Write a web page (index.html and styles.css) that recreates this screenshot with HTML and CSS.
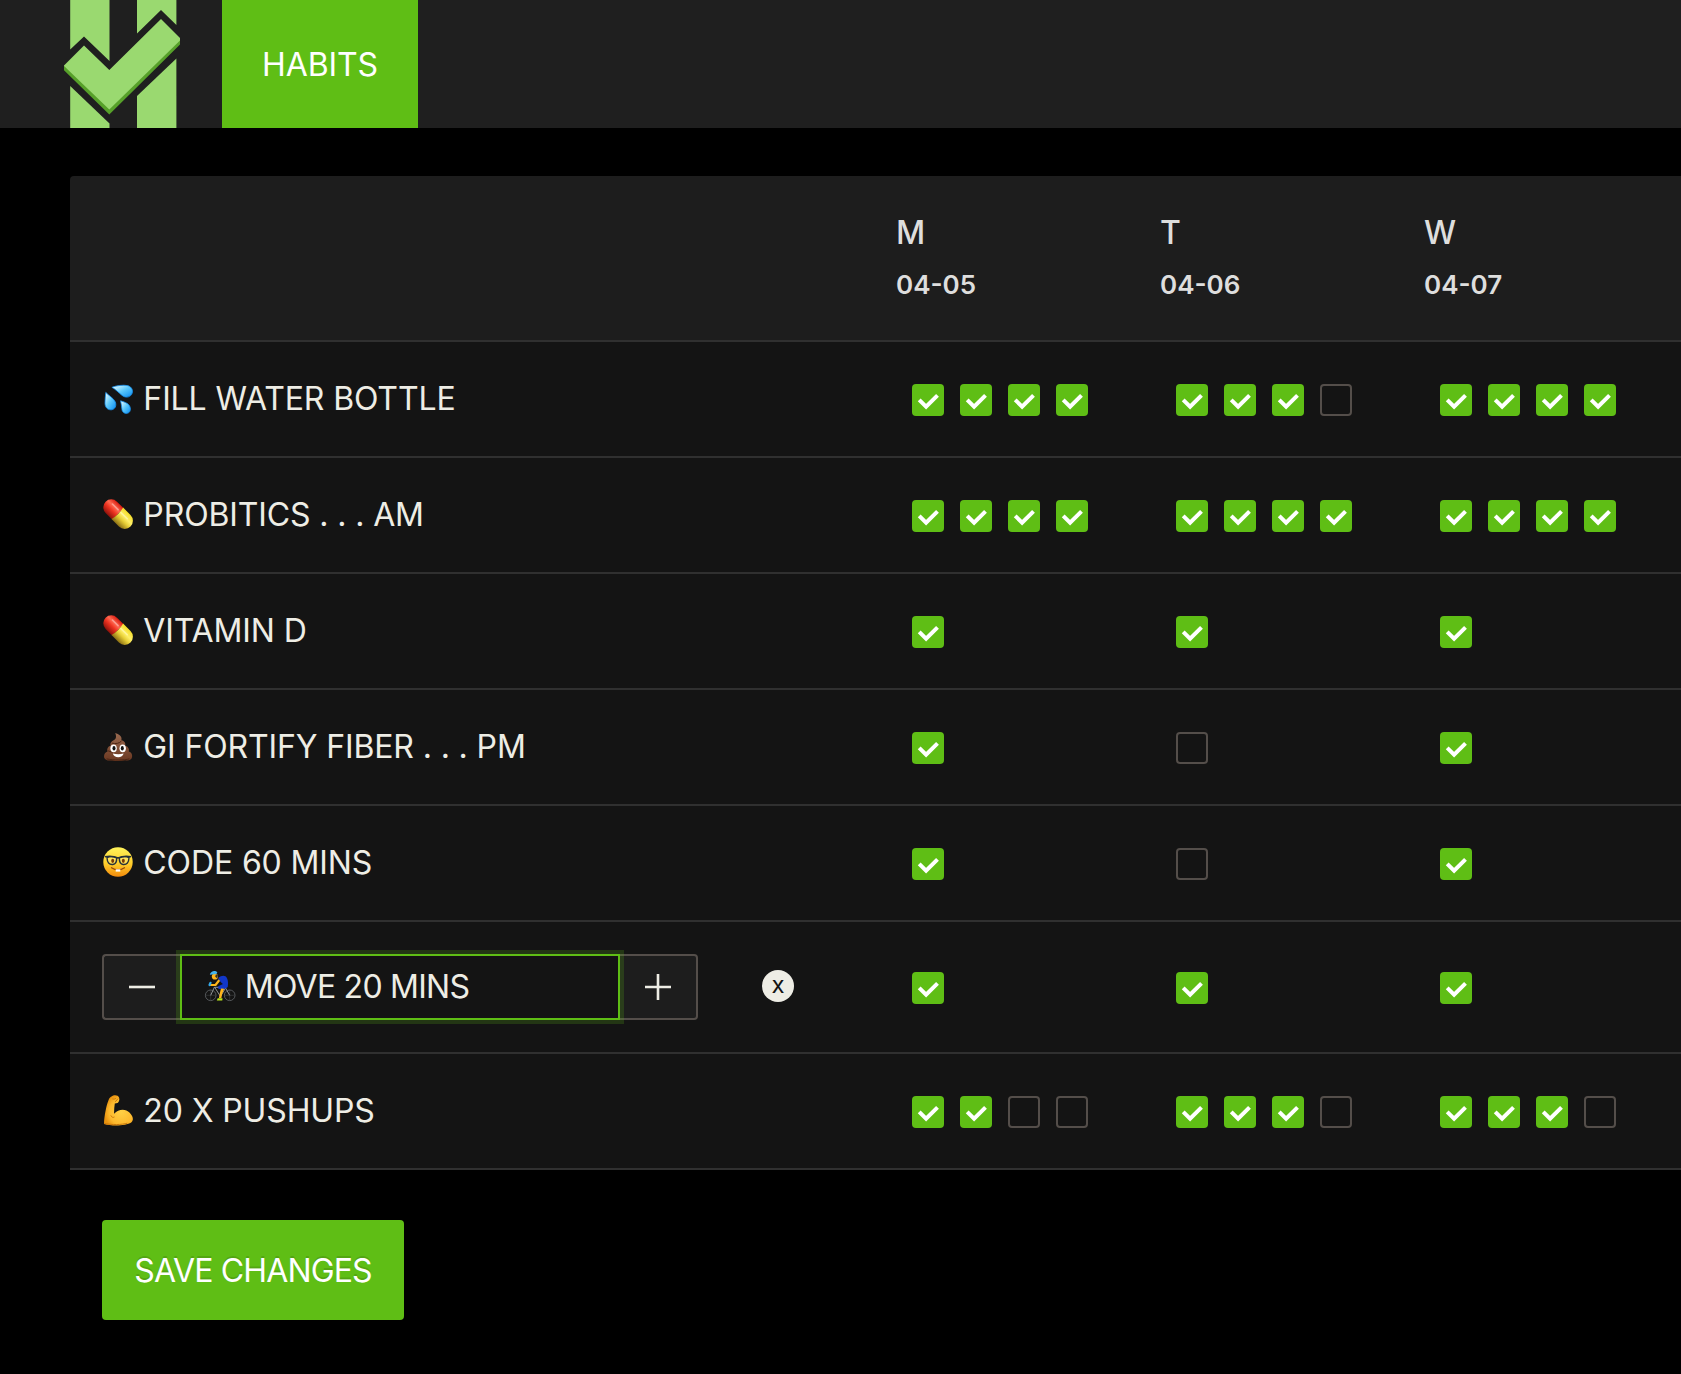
FILE: index.html
```html
<!DOCTYPE html>
<html lang="en">
<head>
<meta charset="utf-8">
<title>Habits</title>
<link rel="stylesheet" href="styles.css">
</head>
<body>
<svg class="sprite" aria-hidden="true">
  <defs>
    <linearGradient id="water" x1="0" y1="0" x2="1" y2="1"><stop offset="0.1" stop-color="#d9f6ff"/><stop offset="0.5" stop-color="#5cc8fb"/><stop offset="1" stop-color="#0a8cf0"/></linearGradient>
    <linearGradient id="pill-red" x1="0" y1="0" x2="0" y2="1"><stop offset="0" stop-color="#d81c10"/><stop offset="0.35" stop-color="#ff6a52"/><stop offset="0.6" stop-color="#ee3320"/><stop offset="1" stop-color="#8e120b"/></linearGradient>
    <linearGradient id="pill-yellow" x1="0" y1="0" x2="0" y2="1"><stop offset="0" stop-color="#f4dc26"/><stop offset="0.35" stop-color="#fff06a"/><stop offset="0.6" stop-color="#e6ce35"/><stop offset="1" stop-color="#8a6e14"/></linearGradient>
    <linearGradient id="brown" x1="0" y1="0" x2="0" y2="1"><stop offset="0" stop-color="#9a6a50"/><stop offset="1" stop-color="#6b3821"/></linearGradient>
    <linearGradient id="face" x1="0" y1="0" x2="0" y2="1"><stop offset="0" stop-color="#fff35a"/><stop offset="0.55" stop-color="#ffcf2c"/><stop offset="1" stop-color="#f28a0c"/></linearGradient>
    <radialGradient id="skin" cx="0.6" cy="0.55" r="0.6"><stop offset="0" stop-color="#ffd045"/><stop offset="0.7" stop-color="#fdb92d"/><stop offset="1" stop-color="#e8920f"/></radialGradient>
  </defs>
  <symbol id="e-water" viewBox="0 0 32 32">
    <g fill="url(#water)" stroke="#1590f0" stroke-width=".8" stroke-linejoin="round">
      <path d="M9.900 5.300C14 3.700 21 2.600 25.500 3.600c4.700 1.200 6.200 5.600 4 9-2.100 3-6.300 3.300-9.400.8C16.500 10.600 13.800 7.500 9.900 5.300Z"/>
      <path d="M3.800 10.400C6.500 13.200 11.500 16.200 13.200 19.800c1.500 3.600.100 7.600-3.900 8-4.200.2-6.300-3-6.300-6.700 0-3.600.5-7.500.8-10.700Z"/>
      <path d="M18.600 18.800c3 1 6.700 1.900 8.600 4.500 2.100 3.200 1.400 7.300-2 8-3.200.6-5.300-1.700-5.400-4.800-.1-2.700-.8-5.200-1.200-7.700Z"/>
    </g>
  </symbol>
  <symbol id="e-pill" viewBox="0 0 32 32">
    <g transform="translate(16 16) rotate(45)">
      <path d="M0-8H-9.500A8 8 0 0 0-9.500 8H0Z" fill="url(#pill-red)"/>
      <path d="M-1-8.200H9.500a8.200 8.200 0 0 1 0 16.400H-1Q1.200 0-1-8.200Z" fill="url(#pill-yellow)"/>
      <path d="M-11-3.200H-3M1-3.200H10" stroke="#fff" stroke-opacity=".4" stroke-width="1.500" stroke-linecap="round"/>
    </g>
  </symbol>
  <symbol id="e-poop" viewBox="0 0 32 32">
    <path d="M13.200 3c3.600 1.200 7.200 3.400 6.200 7 3.200 1.200 4.500 3.200 3.800 5.800 3 .8 4.300 3 3.600 5.700 2.600.8 3.600 3 3.300 5.200-.3 3.200-3.400 4.300-7 3.600-4.600.8-9 .8-13 .1-4.400.7-8-.8-8.100-4 0-2.500 1.400-4.300 3.500-4.900-.9-2.800.4-5 3-5.800-.5-2.800.9-4.800 3.600-5.700 1.900-.9 2.600-3.600 1.100-7Z" fill="url(#brown)"/>
    <path d="M10 13.200c3.600 1 7.600.2 9.300-2M6.500 21c2 1 4 1 5 .7M5 29c7 1.400 17 1.400 22 0" stroke="#4b2514" stroke-width="1" fill="none" stroke-linecap="round"/>
    <ellipse cx="11.600" cy="18.300" rx="3.200" ry="3.900" fill="#fff"/><ellipse cx="20.700" cy="18.300" rx="3.200" ry="3.900" fill="#fff"/>
    <ellipse cx="12" cy="18.300" rx="1.500" ry="2.300" fill="#111"/><ellipse cx="20.300" cy="18.300" rx="1.500" ry="2.300" fill="#111"/>
    <path d="M10.800 23.600q5.400 1.400 10.800 0c-.8 4.800-9.900 4.800-10.800 0Z" fill="#fff"/>
  </symbol>
  <symbol id="e-nerd" viewBox="0 0 32 32">
    <circle cx="16" cy="16" r="14.700" fill="url(#face)"/>
    <g fill="#fff6a0" fill-opacity=".35" stroke="#26313a" stroke-width="1.400"><path d="M5 11.500q4.800-1.800 9.600.3.400 6.300-3.800 6.700-5.500.500-5.800-7Z"/><path d="M27 11.500q-4.800-1.800-9.600.3-.4 6.300 3.800 6.700 5.500.500 5.800-7Z"/></g>
    <path d="M3 10.800q6.500-1.700 13 1.200 6.500-2.900 13-1.200" stroke="#26313a" stroke-width="1.500" fill="none"/>
    <ellipse cx="10.700" cy="14.800" rx="1.500" ry="2.100" fill="#7a3b08"/><ellipse cx="21.300" cy="14.800" rx="1.500" ry="2.100" fill="#7a3b08"/>
    <path d="M9.500 21.800q6.500 4.200 13 0" stroke="#9a4a08" stroke-width="1.300" fill="none" stroke-linecap="round"/>
    <path d="M13.700 23.300h4.600v2.300h-4.600Z" fill="#fff"/>
  </symbol>
  <symbol id="e-bike" viewBox="0 0 32 32">
    <g fill="none" stroke="#55585b" stroke-width="1"><circle cx="6.700" cy="25.300" r="5.300"/><circle cx="25.700" cy="25.300" r="5.300"/><path d="M1.600 25.300h10M6.700 20v10M20.500 25.300h10M25.700 20v10" stroke-width=".4"/></g>
    <path d="M6.700 25.300 10.500 17l6 9.500 5-8.500 4.200 7.300M10.500 17.300h10.800" fill="none" stroke="#8d9194" stroke-width="1"/>
    <path d="M15 10.500 11.500 15H6.500" fill="none" stroke="#ffb61a" stroke-width="2.200" stroke-linecap="round" stroke-linejoin="round"/>
    <path d="M6.500 12.800 5.500 15" stroke="#35a8e8" stroke-width="2.200" stroke-linecap="round"/>
    <path d="M14.200 8c3.200-2.800 7.200-3.200 8.800.200 1.300 2.700 1.200 6 .7 8.800-1.800 2.200-6.100 2.300-9.200 2l-.4-2.800 4.900-2.200c-1.600-1.200-3.900-3.500-4.800-6Z" fill="#1237c8"/>
    <path d="m17 18.400 3.200.3-2.100 5.300-.7 4h-2.500l1-5.300Z" fill="#ffb61a"/>
    <path d="M13.700 28.200h4.800l-.2 2.300h-5.500Z" fill="#b9e51b"/>
    <circle cx="10.900" cy="6.500" r="3.100" fill="#ffb61a"/>
    <path d="M5.800 4.700C6.800.5 11.400.2 13.300 2.200l-.8 1.800Z" fill="#45b4ec"/><path d="m11.800 4.400 2.200.2-.7 4-2.100-1.800Z" fill="#31302d"/>
  </symbol>
  <symbol id="e-arm" viewBox="0 0 32 32">
    <path d="M9.500 2.600c2.400-2.200 6.700-1.600 7.500.8.800 2.200.200 4.500-1.400 5.600l-2.800.500c-.5 3.600-.8 7-.7 10.200 4.500-5 11.400-5.400 15.600-1 3.600 3.800 4.200 7.600 1.500 9.700-5 3.300-18.600 4.100-27.200 1.600C2.200 22 4.500 10.500 6.800 5.500c.5-1.300 1.500-2.200 2.700-2.900Z" fill="url(#skin)"/>
    <path d="M10.800 5c1 .2 2.400.200 3-.6M13.500 7.500l2.300-2.600M9 21.800c.7 1.500 2 2 3.100 1.400M2.500 29.400c7 1.800 17.500 1.400 22.500-.1" fill="none" stroke="#c9780c" stroke-width="1" stroke-linecap="round"/>
  </symbol>
  <symbol id="on" viewBox="0 0 32 32"><rect width="32" height="32" rx="4" fill="#5fbe15"/><path d="M7.200 15.800 14.100 22.600 25.500 11.300" fill="none" stroke="#fff" stroke-width="4"/></symbol>
  <symbol id="off" viewBox="0 0 32 32"><rect x="1" y="1" width="30" height="30" rx="3" fill="none" stroke="#544e4a" stroke-width="2"/></symbol>
</svg>

<header class="navbar">
  <svg class="logo" viewBox="64 0 116 128" role="img" aria-label="Logo">
    <g fill="#9ad970"><path d="M70.200 0h39.300v61L84 36.500 70.200 49.500Z"/><path d="M137 0h39.400v25L161 10 137 33.500Z"/><path d="m70.200 86 39.300 37.500v4.500H70.200Z"/><path d="M176.400 58.500V128H137V96Z"/></g>
    <path d="M64 65.500v4.700l45.300 44.300L180 44.500V38l-70.700 69Z" fill="#57a12a"/>
    <path d="M64 65.500 84 45.500 109.300 70 161 19l19 19v2.500L109.300 109.500 64 66Z" fill="#9ad970"/>
  </svg>
  <a class="tab">HABITS</a>
</header>

<main class="page">
  <table class="habits">
    <colgroup><col class="name-col"><col class="day-col"><col class="day-col"><col></colgroup>
    <thead>
      <tr><th></th><th>M<br><small>04-05</small></th><th>T<br><small>04-06</small></th><th>W<br><small>04-07</small></th></tr>
    </thead>
    <tbody>
      <tr>
        <td><svg class="emoji"><use href="#e-water"/></svg> FILL WATER BOTTLE</td>
        <td><div class="checks"><svg><use href="#on"/></svg><svg><use href="#on"/></svg><svg><use href="#on"/></svg><svg><use href="#on"/></svg></div></td>
        <td><div class="checks"><svg><use href="#on"/></svg><svg><use href="#on"/></svg><svg><use href="#on"/></svg><svg><use href="#off"/></svg></div></td>
        <td><div class="checks"><svg><use href="#on"/></svg><svg><use href="#on"/></svg><svg><use href="#on"/></svg><svg><use href="#on"/></svg></div></td>
      </tr>
      <tr>
        <td><svg class="emoji"><use href="#e-pill"/></svg> PROBITICS . . . AM</td>
        <td><div class="checks"><svg><use href="#on"/></svg><svg><use href="#on"/></svg><svg><use href="#on"/></svg><svg><use href="#on"/></svg></div></td>
        <td><div class="checks"><svg><use href="#on"/></svg><svg><use href="#on"/></svg><svg><use href="#on"/></svg><svg><use href="#on"/></svg></div></td>
        <td><div class="checks"><svg><use href="#on"/></svg><svg><use href="#on"/></svg><svg><use href="#on"/></svg><svg><use href="#on"/></svg></div></td>
      </tr>
      <tr>
        <td><svg class="emoji"><use href="#e-pill"/></svg> VITAMIN D</td>
        <td><div class="checks"><svg><use href="#on"/></svg></div></td>
        <td><div class="checks"><svg><use href="#on"/></svg></div></td>
        <td><div class="checks"><svg><use href="#on"/></svg></div></td>
      </tr>
      <tr>
        <td><svg class="emoji"><use href="#e-poop"/></svg> GI FORTIFY FIBER . . . PM</td>
        <td><div class="checks"><svg><use href="#on"/></svg></div></td>
        <td><div class="checks"><svg><use href="#off"/></svg></div></td>
        <td><div class="checks"><svg><use href="#on"/></svg></div></td>
      </tr>
      <tr>
        <td><svg class="emoji"><use href="#e-nerd"/></svg> CODE 60 MINS</td>
        <td><div class="checks"><svg><use href="#on"/></svg></div></td>
        <td><div class="checks"><svg><use href="#off"/></svg></div></td>
        <td><div class="checks"><svg><use href="#on"/></svg></div></td>
      </tr>
      <tr>
        <td>
          <div class="editor">
            <div class="group">
              <span class="addon minus"><svg class="sign" viewBox="0 0 28 28"><path d="M1 14h26"/></svg></span>
              <div class="field"><span><svg class="emoji"><use href="#e-bike"/></svg> MOVE 20 MINS</span></div>
              <span class="addon plus"><svg class="sign" viewBox="0 0 28 28"><path d="M1 14h26M14 1v26"/></svg></span>
            </div>
            <span class="remove">x</span>
          </div>
        </td>
        <td><div class="checks"><svg><use href="#on"/></svg></div></td>
        <td><div class="checks"><svg><use href="#on"/></svg></div></td>
        <td><div class="checks"><svg><use href="#on"/></svg></div></td>
      </tr>
      <tr>
        <td><svg class="emoji"><use href="#e-arm"/></svg> 20 X PUSHUPS</td>
        <td><div class="checks"><svg><use href="#on"/></svg><svg><use href="#on"/></svg><svg><use href="#off"/></svg><svg><use href="#off"/></svg></div></td>
        <td><div class="checks"><svg><use href="#on"/></svg><svg><use href="#on"/></svg><svg><use href="#on"/></svg><svg><use href="#off"/></svg></div></td>
        <td><div class="checks"><svg><use href="#on"/></svg><svg><use href="#on"/></svg><svg><use href="#on"/></svg><svg><use href="#off"/></svg></div></td>
      </tr>
    </tbody>
  </table>
  <button class="save">SAVE CHANGES</button>
</main>
</body>
</html>
```

FILE: styles.css
```css
* { box-sizing: border-box; }

body {
  margin: 0;
  min-height: 100vh;
  background: #000;
  color: #eeede5;
  font-family: Inter, "Liberation Sans", sans-serif;
  font-size: 32px;
  font-weight: 400;
  letter-spacing: -0.13px;
  line-height: 50px;
}

.sprite {
  position: absolute;
  width: 0;
  height: 0;
}

.navbar {
  display: flex;
  height: 128px;
  padding-left: 64px;
  background: #1f1f1f;
}

.logo {
  width: 116px;
  height: 128px;
  margin-right: 42px;
}

.tab {
  display: flex;
  align-items: center;
  justify-content: center;
  width: 196px;
  padding-top: 2px;
  background: #5fbe15;
  color: #fff;
}

.page { padding: 48px 0 0 70px; }

.habits {
  width: 100%;
  table-layout: fixed;
  border-collapse: separate;
  border-spacing: 0;
}

.name-col { width: 794px; }
.day-col { width: 264px; }

.habits th,
.habits td {
  padding: 32px 0 32px 32px;
  border-bottom: 2px solid #303030;
  background: #141414;
  text-align: left;
  font-weight: 400;
  vertical-align: middle;
  white-space: nowrap;
}

.habits th {
  background: #1d1d1d;
  color: #dededd;
  font-weight: 500;
}

.habits th:first-child { border-top-left-radius: 4px; }

.habits small {
  font-size: 26px;
  font-weight: 600;
  letter-spacing: 0;
  line-height: 0;
}

.emoji {
  width: 32px;
  height: 32px;
  margin-right: 0.5px;
  vertical-align: -4px;
}

.checks {
  display: flex;
  gap: 16px;
  padding: 2px 0 0 16px;
}

.checks svg {
  width: 32px;
  height: 32px;
}

.editor {
  display: flex;
  align-items: center;
  gap: 64px;
}

.group {
  display: flex;
  width: 596px;
  height: 66px;
}

.addon {
  display: flex;
  align-items: center;
  justify-content: center;
  width: 78px;
  border: 2px solid #544e4a;
  background: #1d1d1d;
}

.minus {
  border-right: 0;
  border-radius: 4px 0 0 4px;
}

.plus {
  border-left: 0;
  border-radius: 0 4px 4px 0;
}

.sign {
  width: 28px;
  height: 28px;
  fill: none;
  stroke: #eeede5;
  stroke-width: 2.6;
}

.field {
  display: flex;
  align-items: center;
  flex: 1;
  padding-left: 22px;
  border: 2px solid #5fbe15;
  box-shadow: 0 0 0 4px rgba(95, 190, 21, 0.2);
  letter-spacing: -0.75px;
  z-index: 1;
}

.remove {
  display: flex;
  align-items: center;
  justify-content: center;
  width: 32px;
  height: 32px;
  margin-bottom: 2px;
  padding-bottom: 3px;
  border-radius: 50%;
  background: #eeede5;
  color: #141414;
  font-size: 24px;
  letter-spacing: 0;
  line-height: 26px;
}

.save {
  display: block;
  width: 302px;
  height: 100px;
  margin: 50px 0 0 32px;
  padding: 2px 0 0;
  border: 0;
  border-radius: 4px;
  background: #5fbe15;
  color: #fff;
  font: inherit;
  letter-spacing: -0.85px;
  text-shadow: 0 -2px 0 rgba(0, 0, 0, 0.12);
}
```
